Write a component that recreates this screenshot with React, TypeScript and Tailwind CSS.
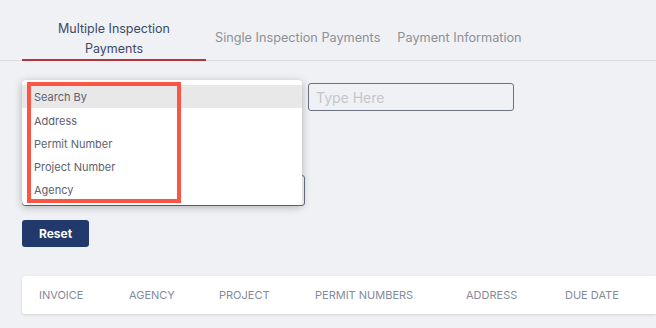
const FONT = "font-['Inter','Open_Sans',sans-serif]";

const columns = [
  { label: "Invoice", w: "w-[90px]" },
  { label: "Agency", w: "w-[90px]" },
  { label: "Project", w: "w-[96px]" },
  { label: "Permit Numbers", w: "w-[151px]" },
  { label: "Address", w: "w-[99px]" },
  { label: "Due Date", w: "w-[90px]" },
];

const options = ["Address", "Permit Number", "Project Number", "Agency"];

export default function App() {
  return (
    <div className={`${FONT} h-[328px] w-[656px] overflow-hidden bg-[#f0f1f4]`}>
      {/* tabs */}
      <div className="flex h-[61px] items-end border-b border-[#dcdde1] pl-[22px]">
        <div className="-mb-px w-[184px] border-b-2 border-[#b3343a] pb-0 text-center text-[12.5px] leading-[20px] text-[#3d4a66]">
          Multiple Inspection
          <br />
          Payments
        </div>
        <div className="pb-[12px] pl-[9px] text-[12.7px] leading-[20px] text-[#8d9098]">
          Single Inspection Payments
        </div>
        <div className="pb-[12px] pl-[17px] text-[12.7px] leading-[20px] text-[#8d9098]">
          Payment Information
        </div>
      </div>

      {/* search form */}
      <div className="relative pl-[22px] pt-[22px]">
        <div className="flex items-center gap-[6px]">
          <div className="h-[27px] w-[280px] rounded-[3px] border border-[#233a6a] bg-white" />
          <div className="flex h-[28px] w-[206px] items-center rounded-[3px] border border-[#6b7080] px-[7px] text-[14px] text-[#c4c6cc]">
            Type Here
          </div>
        </div>
        <div className="mt-[10px] h-[27px] w-[280px] rounded-[3px] border border-[#6b7080] bg-white" />
        <div className="mt-[16px] h-[10px] w-[4px] bg-[#f0a060]" />
        <div className="mt-[1px] h-[31px] w-[283px] rounded-[3px] border border-[#6b7080] bg-white" />

        {/* open dropdown */}
        <div className="absolute left-[22px] top-[19px] w-[280px] rounded-[4px] bg-white py-[5px] shadow-[0_2px_8px_rgba(0,0,0,0.28)]">
          <div className="flex h-[23px] items-center bg-[#e8e8e8] pl-[12px] pt-[2px] text-[11px] text-[#5d6170]">
            Search By
          </div>
          {options.map((o) => (
            <div key={o} className="flex h-[23px] items-center pl-[12px] pt-[3px] text-[11px] text-[#5d6170]">
              {o}
            </div>
          ))}
        </div>

        {/* annotation box */}
        <div className="absolute left-[27px] top-[21px] h-[121px] w-[154px] border-4 border-[#fb5545]" />

        <button className="mt-[14px] flex h-[27px] w-[67px] items-center justify-center rounded-[3px] bg-[#213a6b] text-[12px] font-bold text-white">
          Reset
        </button>
      </div>

      {/* table header */}
      <div className="ml-[22px] mt-[29px] flex h-[38px] items-center rounded-l-[3px] bg-white pl-[17px] shadow-[0_1px_3px_rgba(0,0,0,0.12)]">
        {columns.map((c) => (
          <div key={c.label} className={`${c.w} shrink-0 text-[11px] uppercase text-[#858a9b]`}>
            {c.label}
          </div>
        ))}
      </div>
    </div>
  );
}
